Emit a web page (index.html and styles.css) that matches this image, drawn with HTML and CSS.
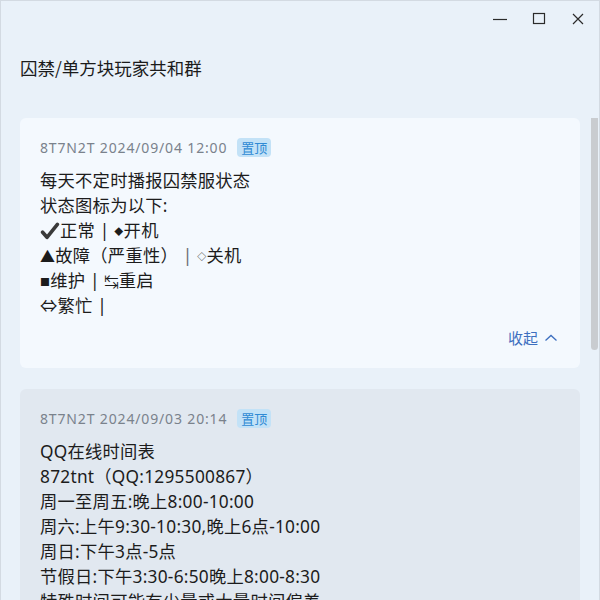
FILE: index.html
```html
<!DOCTYPE html>
<html lang="zh-CN">
<head>
<meta charset="utf-8">
<title>囚禁/单方块玩家共和群</title>
<link rel="stylesheet" href="styles.css">
</head>
<body>
<div class="window">
  <div class="titlebar">
    <button class="ctl" aria-label="最小化">
      <svg width="16" height="16" viewBox="0 0 16 16"><path d="M1 8.5h14" stroke="#2b2b2b" stroke-width="1.2"/></svg>
    </button>
    <button class="ctl" aria-label="最大化">
      <svg width="16" height="16" viewBox="0 0 16 16"><rect x="2.5" y="2.5" width="11" height="10" fill="none" stroke="#2b2b2b" stroke-width="1.2"/></svg>
    </button>
    <button class="ctl" aria-label="关闭">
      <svg width="16" height="16" viewBox="0 0 16 16"><path d="M3 3l10 10M13 3L3 13" stroke="#2b2b2b" stroke-width="1.2"/></svg>
    </button>
  </div>
  <h1 class="title">囚禁/单方块玩家共和群</h1>
  <div class="scroll">
    <div class="list">
      <article class="card">
        <div class="meta"><span class="stamp">8T7N2T 2024/09/04 12:00</span><span class="badge">置顶</span></div>
        <div class="body">
          <p>每天不定时播报囚禁服状态</p>
          <p>状态图标为以下:</p>
          <p><svg class="check" width="20" height="18" viewBox="0 0 20 18" aria-label="✔"><path d="M2.6 10.2 L7 15.3 L17.4 2.4" fill="none" stroke="#3a3a3a" stroke-width="3.6" stroke-linecap="round" stroke-linejoin="round"/></svg>正常 | <span class="sym">◆</span>开机</p>
          <p><span class="tri">▲</span>故障（严重性） <span class="bar">|</span> <span class="sym">◇</span>关机</p>
          <p><span class="sq">■</span>维护 | <span class="sym2">↹</span>重启</p>
          <p>⇔繁忙 |</p>
        </div>
        <div class="foot"><a class="collapse">收起 <svg width="14" height="14" viewBox="0 0 14 14"><path d="M1.5 9.5L7 4.5l5.5 5" fill="none" stroke="#3d6fbf" stroke-width="1.3"/></svg></a></div>
      </article>
      <article class="card hover">
        <div class="meta"><span class="stamp">8T7N2T 2024/09/03 20:14</span><span class="badge">置顶</span></div>
        <div class="body">
          <p>QQ在线时间表</p>
          <p>872tnt（QQ:1295500867）</p>
          <p>周一至周五:晚上8:00-10:00</p>
          <p>周六:上午9:30-10:30,晚上6点-10:00</p>
          <p>周日:下午3点-5点</p>
          <p>节假日:下午3:30-6:50晚上8:00-8:30</p>
          <p>特殊时间可能有少量或大量时间偏差</p>
        </div>
      </article>
    </div>
    <div class="thumb"></div>
  </div>
</div>
</body>
</html>
```
FILE: styles.css
```css
* { box-sizing: border-box; }
html, body { margin: 0; padding: 0; }
body {
  width: 600px;
  height: 600px;
  overflow: hidden;
  font-family: "Noto Sans", "Noto Sans CJK SC", sans-serif;
  background: #e9f1f9;
}
.window {
  width: 600px;
  height: 600px;
  border: 1px solid #d3dae2;
  border-bottom: none;
  background: #e9f1f9;
  display: flex;
  flex-direction: column;
  overflow: hidden;
}
.titlebar {
  height: 35px;
  display: flex;
  justify-content: flex-end;
  align-items: center;
  padding-right: 2px;
}
.ctl {
  width: 39px;
  height: 35px;
  border: none;
  background: transparent;
  padding: 0;
  display: flex;
  align-items: center;
  justify-content: center;
}
.title {
  margin: 0;
  padding: 20px 0 0 19px;
  height: 82px;
  font-size: 17.5px;
  font-weight: 400;
  line-height: 24px;
  color: #1b1b1b;
  font-family: "Noto Sans CJK SC", sans-serif;
}
.scroll {
  position: relative;
  flex: 1;
  overflow: hidden;
}
.list {
  padding: 0 19px 0 19px;
  display: flex;
  flex-direction: column;
  gap: 21px;
}
.card {
  background: #f4f9fe;
  border-radius: 6px;
  padding: 19px 20px 20px 20px;
}
.card.hover { background: #e1e8f0; }
.meta {
  display: flex;
  align-items: center;
  gap: 10px;
  height: 20px;
  font-size: 14px;
  color: #7a828c;
}
.stamp { letter-spacing: 0.85px; }
.badge {
  font-family: "Noto Sans CJK SC", sans-serif;
  font-size: 13px;
  line-height: 19px;
  padding: 0 4px;
  border-radius: 4px;
  background: #c3e2f7;
  color: #2f8ad4;
}
.body {
  margin-top: 11px;
  font-size: 17.3px;
  line-height: 25px;
  letter-spacing: 0.25px;
  color: #1c1c1c;
}
.body p { margin: 0; height: 25px; white-space: nowrap; }
.check { vertical-align: -3px; }
.sym, .sym2, .tri, .sq { line-height: 1; }
.sym { font-size: 9px; vertical-align: 2px; color: #1c1c1c; }
.sym2 { font-size: 14px; }
.tri { font-size: 15px; }
.sq { font-size: 10px; vertical-align: 1px; }
.bar { color: #6a6f74; }
.foot {
  margin-top: 10px;
  display: flex;
  justify-content: flex-end;
  padding-right: 2px;
}
.collapse {
  display: flex;
  align-items: center;
  gap: 6px;
  font-size: 15px;
  line-height: 20px;
  color: #3d6fbf;
  font-family: "Noto Sans CJK SC", sans-serif;
}
.thumb {
  position: absolute;
  right: 1px;
  top: -13px;
  width: 7px;
  height: 245px;
  border-radius: 4px;
  background: #c9ccd0;
}
```
